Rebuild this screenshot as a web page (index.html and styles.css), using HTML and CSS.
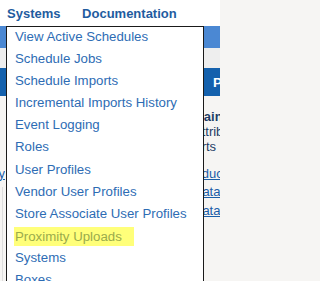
FILE: index.html
```html
<!DOCTYPE html>
<html>
<head>
<meta charset="utf-8">
<link rel="stylesheet" href="styles.css">
</head>
<body>
<div class="page">
  <nav class="topnav">
    <span class="navitem">Systems</span>
    <span class="navitem">Documentation</span>
  </nav>
  <div class="band band-light"></div>
  <div class="band band-gray"></div>
  <div class="band band-dark">
    <div></div>
    <div class="band-title">Proximity Uploads</div>
  </div>
  <div class="content">
    <div class="leftcol">
      <div class="leftclip"><a class="link">History</a></div>
      <div class="leftrule"></div>
    </div>
    <div class="rightcol">
      <div class="info">
        <div class="info-title">Main</div>
        <div>Attributes</div>
        <div>Arts</div>
      </div>
      <div class="links">
        <a class="link">Education</a>
        <a class="link">Database</a>
        <a class="link">Database</a>
      </div>
    </div>
  </div>

  <ul class="dropdown">
    <li class="item">View Active Schedules</li>
    <li class="item">Schedule Jobs</li>
    <li class="item">Schedule Imports</li>
    <li class="item">Incremental Imports History</li>
    <li class="item">Event Logging</li>
    <li class="item">Roles</li>
    <li class="item">User Profiles</li>
    <li class="item">Vendor User Profiles</li>
    <li class="item">Store Associate User Profiles</li>
    <li class="item"><span class="hl">Proximity Uploads</span></li>
    <li class="item">Systems</li>
    <li class="item">Boxes</li>
    <li class="item">Settings</li>
  </ul>
</div>
</body>
</html>
```

FILE: styles.css
```css
html, body {
  margin: 0;
  padding: 0;
  width: 220px;
  height: 281px;
  overflow: hidden;
  background: #f6f5f3;
}

.page {
  position: relative;
  width: 220px;
  height: 281px;
  overflow: hidden;
  font-family: "Liberation Sans", Arial, sans-serif;
}

.topnav {
  display: flex;
  gap: 21.6px;
  height: 26px;
  box-sizing: border-box;
  padding: 6px 0 0 7px;
  background: #ffffff;
  font-size: 13px;
  line-height: 15px;
  font-weight: bold;
  color: #1f5c9f;
  white-space: nowrap;
}

.band-light {
  height: 22px;
  background: #4b88d3;
}

.band-gray {
  height: 20px;
  background: #eeeeee;
}

.band-dark {
  height: 28px;
  background: #1461ad;
  display: grid;
  grid-template-columns: 213px 1fr;
  align-items: center;
}

.band-title {
  color: #ffffff;
  font-weight: bold;
  font-size: 13.5px;
  white-space: nowrap;
}

.content {
  display: grid;
  grid-template-columns: 193px 1fr;
}

.leftcol {
  padding-top: 68.7px;
}

.leftclip {
  width: 5px;
  overflow: hidden;
  display: flex;
  justify-content: flex-end;
  font-size: 13px;
  line-height: 18.5px;
}

.leftrule {
  margin-left: 2px;
  margin-top: 4px;
  height: 120px;
  border-left: 1px solid #dddddd;
}

.link {
  color: #1a5ea8;
  text-decoration: underline;
  white-space: nowrap;
}

.rightcol {
  padding-top: 12.5px;
  font-size: 13px;
  white-space: nowrap;
}

.info {
  line-height: 15px;
  color: #1d3d66;
}

.info-title {
  font-weight: bold;
}

.links {
  margin-top: 11.2px;
  display: flex;
  flex-direction: column;
  line-height: 18.5px;
}

.dropdown {
  position: absolute;
  top: 26px;
  left: 6px;
  width: 198px;
  box-sizing: border-box;
  margin: 0;
  padding: 0;
  list-style: none;
  background: #ffffff;
  border: 1px solid #1a1a1a;
}

.item {
  font-size: 13.25px;
  line-height: 20px;
  padding: 0 0 2.1px 8px;
  color: #2d6cb4;
  white-space: nowrap;
}

.hl {
  display: inline-block;
  vertical-align: top;
  margin: 1px 0 0 -1px;
  padding: 0 12px 0 1px;
  line-height: 19px;
  background: #ffff7a;
  color: #9aab4c;
}
```
